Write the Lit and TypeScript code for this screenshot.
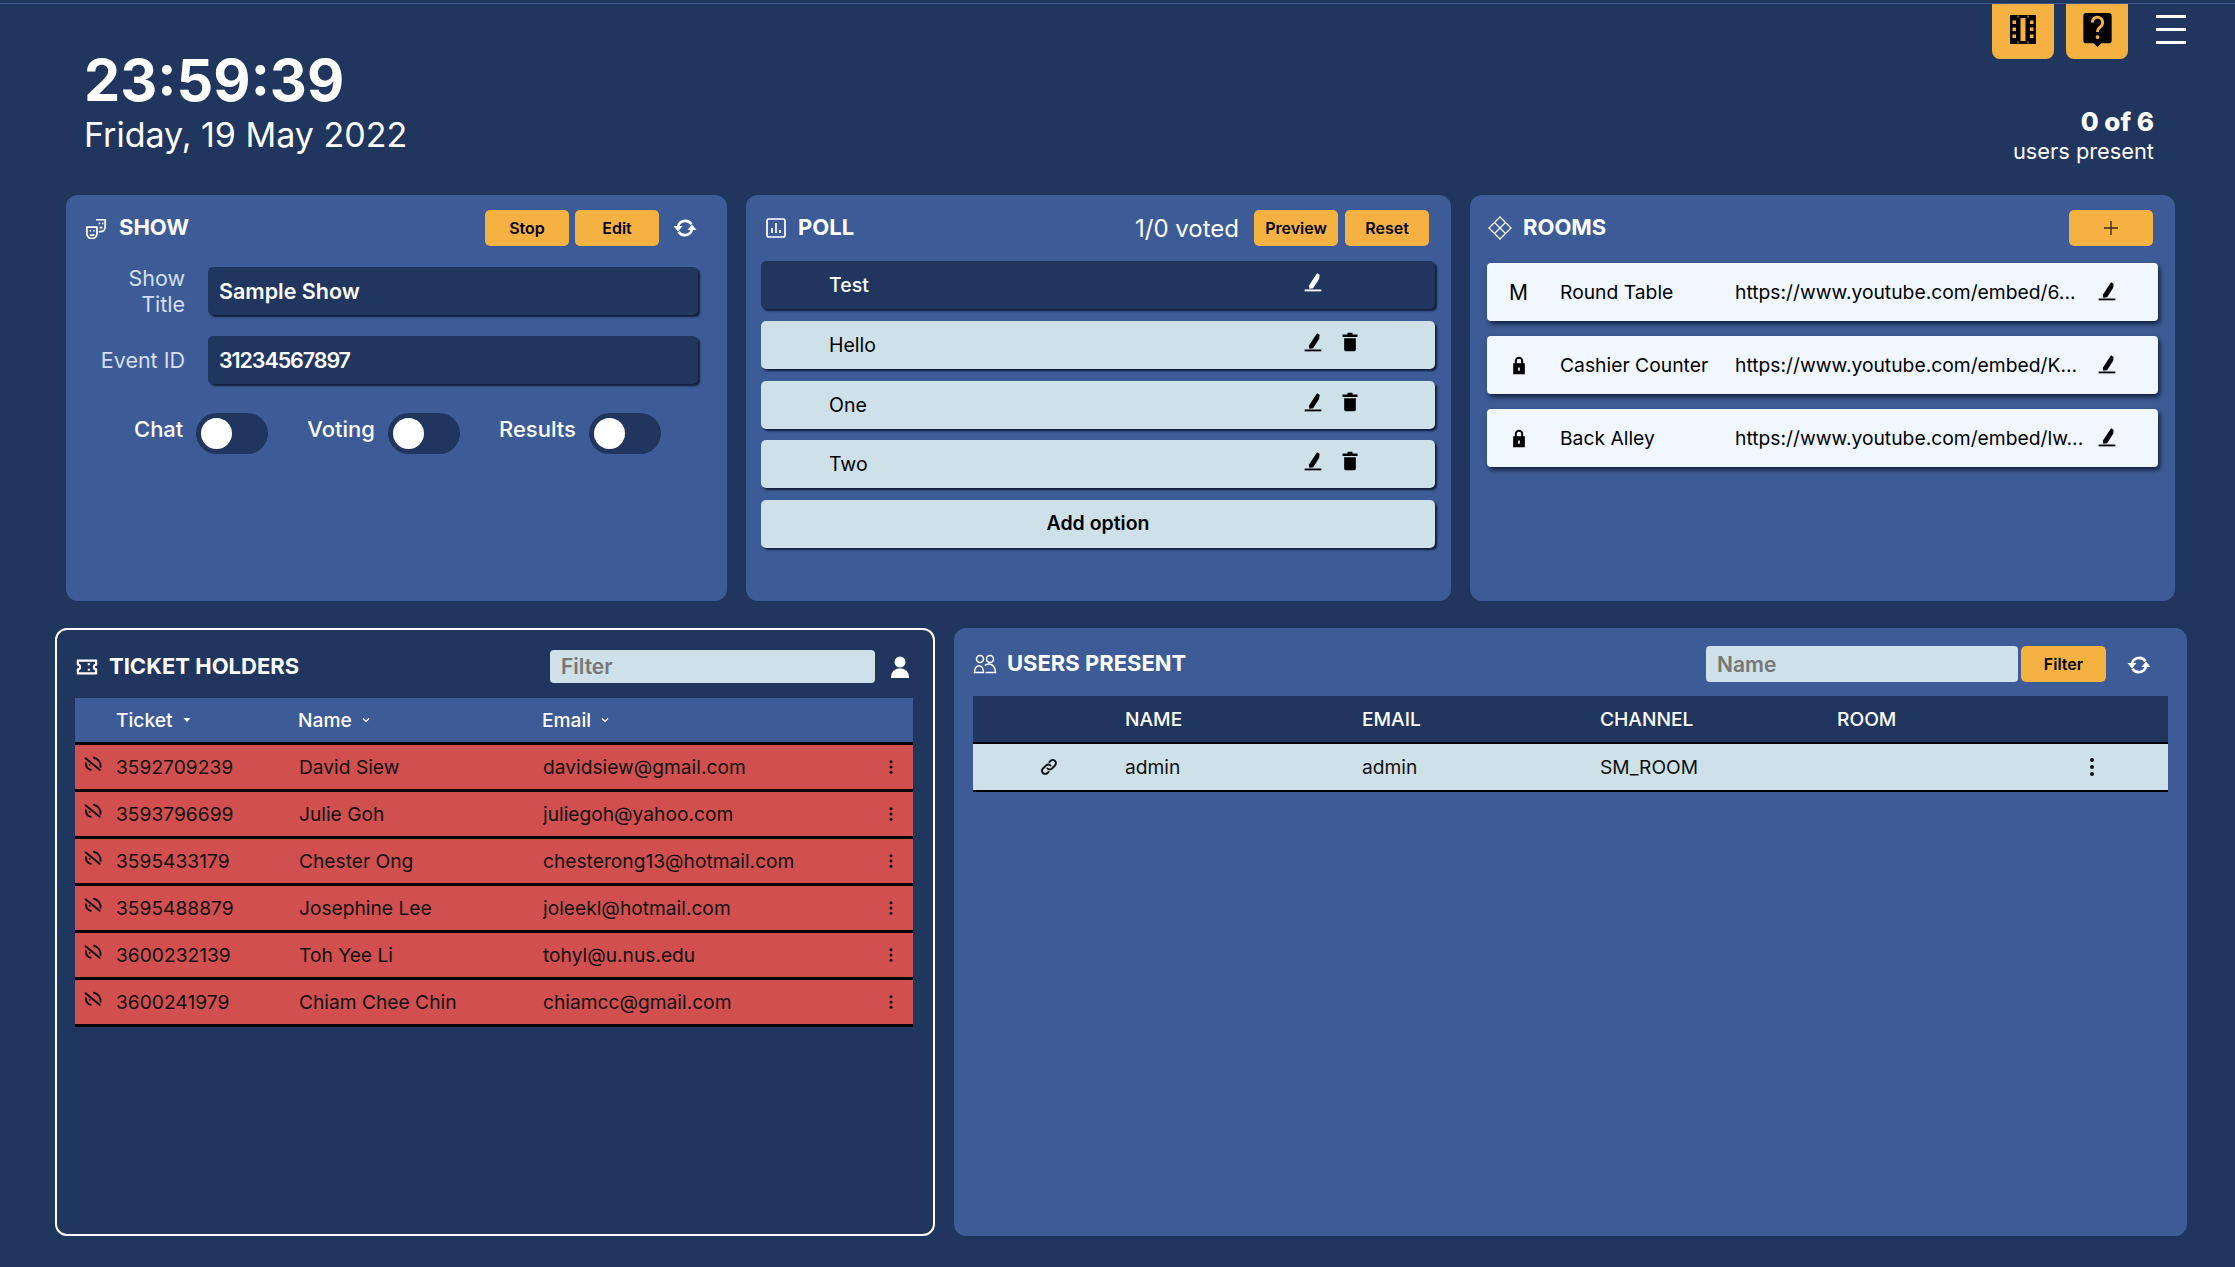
import { LitElement, css, html, svg } from 'lit'
import { customElement } from 'lit/decorators.js'

const icon = (body: unknown, size = 24, cls = '') =>
  html`<svg class="ico ${cls}" width=${size} height=${size} viewBox="0 0 24 24">${body}</svg>`

const pen = (size = 20) => icon(svg`
  <path d="M17 1.500l3 2-.6 4.500-7.200 11.500-4.600.6-.6-3.600L14.500 5z" fill="currentColor"/>
  <rect x="2" y="21" width="20" height="2.200" fill="currentColor"/>`, size)
const trash = (size = 20) => icon(svg`
  <path d="M9 1h6v2h6v3H3V3h6z" fill="currentColor"/>
  <path d="M5 7.500h14V21a2 2 0 0 1-2 2H7a2 2 0 0 1-2-2z" fill="currentColor"/>`, size)
const sync = (size = 24) => icon(svg`
  <path d="M5 10.500A7.500 7.500 0 0 1 18.500 8.200" fill="none" stroke="currentColor" stroke-width="2.600"/>
  <path d="M19 13.500A7.500 7.500 0 0 1 5.500 15.800" fill="none" stroke="currentColor" stroke-width="2.600"/>
  <path d="M0.500 10h9l-4.500 5.500zM14.500 14h9l-4.500-5.500z" fill="currentColor"/>`, size)
const lock = () => icon(svg`
  <path fill-rule="evenodd" d="M7 10V7a5 5 0 0 1 10 0v3h2v13H5V10zm2.400 0h5.200V7a2.600 2.600 0 0 0-5.200 0zM11 15v4h2v-4z" fill="currentColor"/>`, 20)
const dots = (size = 18) => icon(svg`
  <circle cx="12" cy="5" r="2" fill="currentColor"/>
  <circle cx="12" cy="12" r="2" fill="currentColor"/>
  <circle cx="12" cy="19" r="2" fill="currentColor"/>`, size)
const noSignal = () => icon(svg`
  <g fill="none" stroke="currentColor" stroke-width="2.300" stroke-linecap="round">
    <path d="M3 5l17 14"/>
    <path d="M13 4.500a10 10 0 0 1 8 11"/>
    <path d="M3.500 11a8 8 0 0 0 6 8"/>
    <path d="M8 13h.1"/>
  </g>`, 20)
const caret = (open: boolean) => open
  ? icon(svg`<path d="M5 8h14l-7 8z" fill="currentColor"/>`, 12)
  : icon(svg`<path d="M6 9l6 6 6-6" fill="none" stroke="currentColor" stroke-width="2.400"/>`, 12)

const masksIcon = icon(svg`
  <g fill="none" stroke="currentColor" stroke-width="1.900">
    <path d="M2 11h11v7a5.500 5.500 0 0 1-11 0z"/>
    <path d="M12 3h10v8a5 5 0 0 1-5 5h-2"/>
    <path d="M5 15h1.500M9 15h1.500M5.500 19c1 1.500 3 1.500 4.500 0"/>
    <path d="M15 7h1.500M18.500 7H20M16 11.500h3"/>
  </g>`, 22)
const pollIcon = icon(svg`
  <g fill="none" stroke="currentColor" stroke-width="1.700">
    <rect x="3" y="3" width="18" height="18" rx="2"/>
    <path d="M8 17v-5M12 17V7M16 17v-3"/>
  </g>`)
const roomsIcon = icon(svg`
  <g fill="none" stroke="currentColor" stroke-width="1.300">
    <path d="M12 1l11 11-11 11L1 12z" stroke-linejoin="round"/>
    <path d="M6.500 6.500l11 11M17.500 6.500l-11 11"/>
  </g>`)
const ticketIcon = icon(svg`
  <path d="M2 5h20v4.500a2.500 2.500 0 0 0 0 5V19H2v-4.500a2.500 2.500 0 0 0 0-5z M14 8v2M14 14v2" fill="none" stroke="currentColor" stroke-width="2.300" stroke-linejoin="round"/>`, 22)
const usersIcon = icon(svg`
  <g fill="none" stroke="currentColor" stroke-width="1.500">
    <circle cx="7" cy="7" r="3.500"/><circle cx="17" cy="7" r="3.500"/>
    <path d="M1.500 20.500c0-9 9-9 9 0z"/>
    <path d="M12 14c1-3 10-4 10.500 6.500H12.500"/>
  </g>`)
const personIcon = icon(svg`
  <circle cx="12" cy="7" r="5.500" fill="currentColor"/>
  <path d="M3 23c0-7 4-9.500 9-9.500s9 2.500 9 9.500z" fill="currentColor"/>`)
const linkIcon = icon(svg`
  <g fill="none" stroke="currentColor" stroke-width="2.500" stroke-linecap="round">
    <path d="M10 14a4 4 0 0 0 6 0l4-4a4 4 0 0 0-6-6l-1.500 1.500"/>
    <path d="M14 10a4 4 0 0 0-6 0l-4 4a4 4 0 0 0 6 6l1.500-1.500"/>
  </g>`, 18)
const filmIcon = html`<svg class="ico" width="26" height="29" viewBox="0 0 26 29">
  <path fill-rule="evenodd" d="M0 0h26v29H0zM2.500 5.500v3.500h3.500V5.500zM2.500 12.500v3.500h3.500v-3.500zM2.500 19.500v3.500h3.500v-3.500zM20 5.500v3.500h3.500V5.500zM20 12.500v3.500h3.500v-3.500zM20 19.500v3.500h3.500v-3.500zM10.500 3v23h5V3z M7.500 0.500v2h1v-2zM17.500 0.500v2h1v-2zM7.500 26.500v2h1v-2zM17.500 26.500v2h1v-2z" fill="currentColor"/></svg>`
const helpIcon = html`<svg class="ico" width="29" height="34" viewBox="0 0 30 36">
  <path d="M3 0h24a3 3 0 0 1 3 3v26a3 3 0 0 1-3 3h-8l-4 4-4-4H3a3 3 0 0 1-3-3V3a3 3 0 0 1 3-3z" fill="currentColor"/>
  <path d="M9.500 10a5.500 5.500 0 1 1 9 4.200c-2 1.600-3.500 2.800-3.500 5.800" fill="none" stroke="#f6b143" stroke-width="3"/>
  <circle cx="15" cy="25.500" r="2" fill="#f6b143"/></svg>`
const plusIcon = html`<svg class="ico" width="14" height="14" viewBox="0 0 14 14">
  <path d="M7 0v14M0 7h14" stroke="#3a2c10" stroke-width="1.400"/></svg>`

const pollRows = [
  { text: 'Test', active: true },
  { text: 'Hello' },
  { text: 'One' },
  { text: 'Two' },
]
const rooms = [
  { mark: 'M', name: 'Round Table', url: 'https://www.youtube.com/embed/6...' },
  { mark: '', name: 'Cashier Counter', url: 'https://www.youtube.com/embed/K...' },
  { mark: '', name: 'Back Alley', url: 'https://www.youtube.com/embed/lw...' },
]
const tickets = [
  ['3592709239', 'David Siew', 'davidsiew@gmail.com'],
  ['3593796699', 'Julie Goh', 'juliegoh@yahoo.com'],
  ['3595433179', 'Chester Ong', 'chesterong13@hotmail.com'],
  ['3595488879', 'Josephine Lee', 'joleekl@hotmail.com'],
  ['3600232139', 'Toh Yee Li', 'tohyl@u.nus.edu'],
  ['3600241979', 'Chiam Chee Chin', 'chiamcc@gmail.com'],
]

@customElement('app-root')
export class AppRoot extends LitElement {
  static styles = css`
    :host {
      display: block;
      height: 1267px;
      box-sizing: border-box;
      padding-top: 3px;
      background: #21365e;
      color: #fff;
      font-family: Inter, "Liberation Sans", sans-serif;
      overflow: hidden;
    }
    * { box-sizing: border-box; }
    .ico { display: block; flex: none; }

    .top {
      height: 192px;
      border-top: 1px solid #3a5788;
      display: flex;
      justify-content: space-between;
      padding: 0 49px 0 84px;
    }
    .clock { padding-top: 43px; }
    .time { font-size: 57.500px; font-weight: 700; line-height: 66px; }
    .date { font-size: 34px; line-height: 40px; margin-top: 2px; }
    .top-right { display: flex; flex-direction: column; align-items: flex-end; }
    .top-btns { display: flex; align-items: flex-start; gap: 12px; }
    .top-btn {
      width: 62px;
      height: 55px;
      background: #f6b143;
      color: #000;
      border-radius: 0 0 8px 8px;
      display: flex;
      align-items: center;
      justify-content: center;
      padding-bottom: 4px;
    }
    .burger { width: 30px; margin: 11px 0 0 16px; display: flex; flex-direction: column; gap: 10px; }
    .burger span { height: 3px; background: #fff; }
    .present { margin: 47px 32px 0 0; text-align: right; }
    .present b { display: block; font-size: 26px; font-weight: 800; line-height: 32px; }
    .present span { display: block; font-size: 21.800px; line-height: 26px; }

    .row-a {
      display: grid;
      grid-template-columns: 661px 705px 705px;
      gap: 19px;
      margin-left: 66px;
      height: 406px;
    }
    .row-b {
      display: grid;
      grid-template-columns: 880px 1233px;
      gap: 19px;
      margin: 27px 0 0 55px;
      height: 608px;
    }
    .panel {
      background: #3d5c97;
      border-radius: 12px;
    }
    .head {
      display: flex;
      align-items: center;
      height: 36px;
      margin-top: 15px;
    }
    .head .title {
      font-size: 22px;
      font-weight: 700;
      margin-left: 11px;
      padding-bottom: 2px;
      white-space: nowrap;
    }
    .spacer { flex: 1; }
    .btn {
      height: 36px;
      width: 84px;
      background: #f6b143;
      color: #000;
      border-radius: 5px;
      font-size: 16px;
      font-weight: 600;
      display: flex;
      align-items: center;
      justify-content: center;
    }

    .show { padding: 0 29px 0 19px; }
    .show .title { margin-left: 12px; }
    .show .btns { display: flex; gap: 6px; margin-right: 14px; }
    .show .head > .ico:last-child { margin-right: 1px; }
    .field { display: flex; align-items: center; height: 48px; margin-top: 21px; }
    .field label {
      width: 100px;
      margin-right: 23px;
      text-align: right;
      font-size: 21.500px;
      line-height: 26px;
      color: #d6dfee;
      flex: none;
    }
    .value {
      flex: 1;
      height: 48px;
      background: #21365e;
      border-radius: 5px;
      padding: 0 11px;
      display: flex;
      align-items: center;
      font-size: 21.500px;
      font-weight: 600;
      box-shadow: 2px 2px 2px #111d38;
    }
    .value.num { letter-spacing: -1.1px; }
    .toggles { display: flex; margin-top: 29px; height: 41px; }
    .tog { display: flex; align-items: center; font-size: 22px; font-weight: 500; }
    .tog span { position: relative; top: -5px; }
    .switch {
      width: 72px;
      height: 41px;
      border-radius: 21px;
      background: #21365e;
      margin-left: 13px;
      padding: 5px;
    }
    .switch i { display: block; width: 31px; height: 31px; border-radius: 50%; background: #fff; }

    .poll { padding: 0 16px 0 15px; }
    .poll .head { padding: 0 6px 0 3px; }
    .poll .title { margin-left: 10px; }
    .voted { font-size: 24px; margin-right: 15px; }
    .poll .btns { display: flex; gap: 7px; }
    .opts { display: flex; flex-direction: column; gap: 11.750px; margin-top: 15px; }
    .opt {
      height: 48px;
      background: #cee0e8;
      color: #000;
      border-radius: 5px;
      box-shadow: 2px 2px 2px #111d38;
      display: flex;
      align-items: center;
      padding-left: 68px;
      font-size: 19.500px;
    }
    .opt.dark { background: #21365e; color: #fff; font-weight: 500; }
    .opt .acts { margin-left: auto; width: 132px; display: flex; gap: 17px; margin-top: -6px; }
    .opt.add { justify-content: center; padding: 0 0 2px; font-weight: 600; }

    .rooms { padding: 0 17px; }
    .rooms .head { padding: 0 5px 0 1px; }
    .room-list { display: flex; flex-direction: column; gap: 15px; margin-top: 17px; }
    .room {
      height: 58px;
      background: #f0f7ff;
      color: #000;
      border-radius: 4px;
      box-shadow: 2px 3px 5px #14203c;
      display: grid;
      grid-template-columns: 73px 175px 362px 30px;
      align-items: center;
      font-size: 19.300px;
    }
    .room .mark { display: flex; justify-content: center; padding: 1px 0 0 3px; width: 60px; font-size: 21px; }
    .room .mark .ico { margin-top: -2px; }
    .room .url { white-space: nowrap; }
    .room .pen { margin-top: -3px; }

    .tickets {
      background: #21365e;
      border: 2px solid #fff;
      padding: 0 20px 0 18px;
    }
    .tickets .head { height: 33px; margin-top: 20px; padding-left: 1px; }
    .search {
      background: #cee0e8;
      border-radius: 4px;
      color: #777;
      font-weight: 600;
      display: flex;
      align-items: center;
      padding-left: 11px;
      font-size: 21px;
    }
    .tickets .search { width: 325px; height: 33px; }
    .tickets .person { margin: 0 1px 0 13px; }
    .t-head, .t-row {
      display: grid;
      grid-template-columns: 41px 182px 244px 1fr 44px;
      align-items: center;
      font-size: 19.200px;
    }
    .t-head { height: 44px; background: #3d5c97; margin-top: 15px; font-weight: 500; }
    .t-head div { display: flex; align-items: center; gap: 8px; }
    .t-row {
      height: 47px;
      background: #d14f4f;
      color: #111;
      border-top: 3px solid #000;
    }
    .t-row:last-child { height: 50px; border-bottom: 3px solid #000; }
    .t-row .n { padding-left: 8px; margin-top: -7px; }
    .t-row .name { padding-left: 1px; }
    .t-row .mail { padding-left: 1px; }
    .t-row .d { margin-left: 13px; }

    .users { padding: 0 19px; }
    .users .head { margin-top: 18px; }
    .users .title { margin-left: 10px; }
    .users .search { width: 312px; height: 36px; }
    .users .btn { width: 85px; margin-left: 3px; }
    .users .sync { margin: 2px 17px 0 21px; }
    .u-head, .u-row {
      display: grid;
      grid-template-columns: 152px 237px 238px 237px 237px 18px;
      align-items: center;
      font-size: 19.200px;
    }
    .u-head { height: 46px; background: #21365e; margin-top: 14px; font-weight: 500; }
    .u-row {
      height: 50px;
      background: #cee0e8;
      color: #111;
      border-top: 2px solid #000;
      border-bottom: 2px solid #000;
    }
    .u-row .l { padding-left: 67px; }
    .u-row .d { margin-left: 6px; }
  `

  render() {
    return html`
      <div class="top">
        <div class="clock">
          <div class="time">23:59:39</div>
          <div class="date">Friday, 19 May 2022</div>
        </div>
        <div class="top-right">
          <div class="top-btns">
            <div class="top-btn">${filmIcon}</div>
            <div class="top-btn">${helpIcon}</div>
            <div class="burger"><span></span><span></span><span></span></div>
          </div>
          <div class="present"><b>0 of 6</b><span>users present</span></div>
        </div>
      </div>

      <div class="row-a">
        <section class="panel show">
          <div class="head">
            ${masksIcon}
            <span class="title">SHOW</span>
            <span class="spacer"></span>
            <div class="btns"><div class="btn">Stop</div><div class="btn">Edit</div></div>
            ${sync()}
          </div>
          <div class="field"><label>Show Title</label><div class="value">Sample Show</div></div>
          <div class="field"><label>Event ID</label><div class="value num">31234567897</div></div>
          <div class="toggles">
            ${['Chat', 'Voting', 'Results'].map((t, i) => html`
              <div class="tog" style="margin-left:${[49, 39, 39][i]}px">
                <span>${t}</span><div class="switch"><i></i></div>
              </div>`)}
          </div>
        </section>

        <section class="panel poll">
          <div class="head">
            ${pollIcon}
            <span class="title">POLL</span>
            <span class="spacer"></span>
            <span class="voted">1/0 voted</span>
            <div class="btns"><div class="btn">Preview</div><div class="btn">Reset</div></div>
          </div>
          <div class="opts">
            ${pollRows.map(r => html`
              <div class="opt ${r.active ? 'dark' : ''}">
                ${r.text}
                <div class="acts">${pen()}${r.active ? '' : trash()}</div>
              </div>`)}
            <div class="opt add">Add option</div>
          </div>
        </section>

        <section class="panel rooms">
          <div class="head">
            ${roomsIcon}
            <span class="title">ROOMS</span>
            <span class="spacer"></span>
            <div class="btn">${plusIcon}</div>
          </div>
          <div class="room-list">
            ${rooms.map(r => html`
              <div class="room">
                <div class="mark">${r.mark || lock()}</div>
                <div>${r.name}</div>
                <div class="url">${r.url}</div>
                <div class="pen">${pen()}</div>
              </div>`)}
          </div>
        </section>
      </div>

      <div class="row-b">
        <section class="panel tickets">
          <div class="head">
            ${ticketIcon}
            <span class="title">TICKET HOLDERS</span>
            <span class="spacer"></span>
            <div class="search">Filter</div>
            <div class="person">${personIcon}</div>
          </div>
          <div class="t-head">
            <span></span>
            <div>Ticket ${caret(true)}</div>
            <div>Name ${caret(false)}</div>
            <div>Email ${caret(false)}</div>
            <span></span>
          </div>
          ${tickets.map(t => html`
            <div class="t-row">
              <div class="n">${noSignal()}</div>
              <div>${t[0]}</div>
              <div class="name">${t[1]}</div>
              <div class="mail">${t[2]}</div>
              <div class="d">${dots()}</div>
            </div>`)}
        </section>

        <section class="panel users">
          <div class="head">
            ${usersIcon}
            <span class="title">USERS PRESENT</span>
            <span class="spacer"></span>
            <div class="search">Name</div>
            <div class="btn">Filter</div>
            <div class="sync">${sync()}</div>
          </div>
          <div class="u-head">
            <span></span><div>NAME</div><div>EMAIL</div><div>CHANNEL</div><div>ROOM</div><span></span>
          </div>
          <div class="u-row">
            <div class="l">${linkIcon}</div>
            <div>admin</div><div>admin</div><div>SM_ROOM</div><div></div>
            <div class="d">${dots(24)}</div>
          </div>
        </section>
      </div>
    `
  }
}
